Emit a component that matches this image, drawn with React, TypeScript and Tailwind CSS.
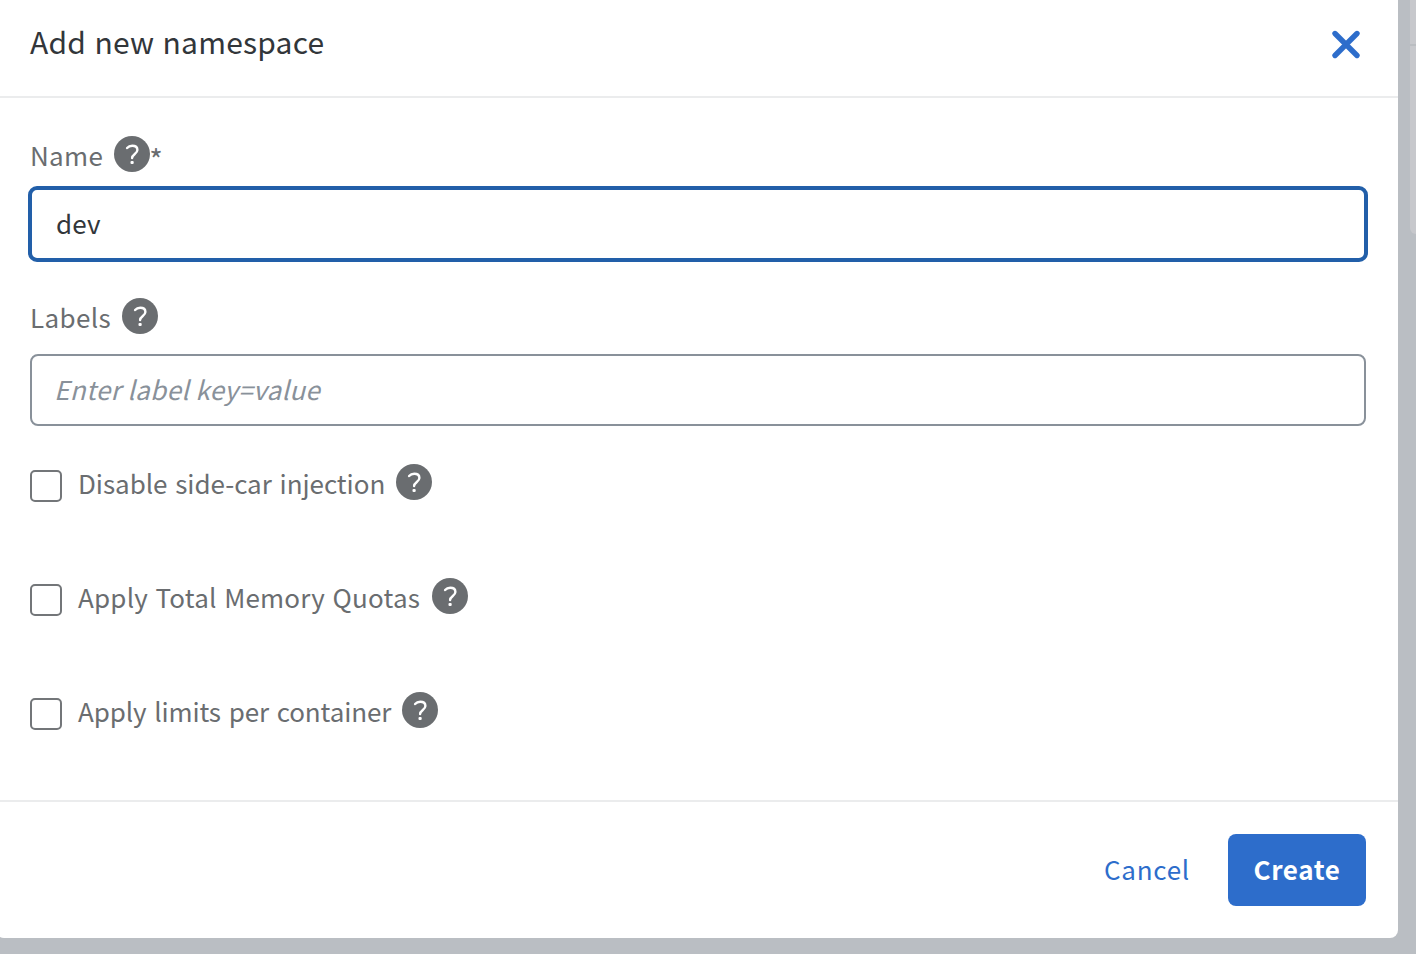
import React, { useState } from "react";

function HelpIcon({ className = "" }: { className?: string }) {
  return (
    <svg viewBox="0 0 36 36" className={`size-9 shrink-0 ${className}`} role="img" aria-label="Help">
      <circle cx="18" cy="18" r="18" fill="#6a6d70" />
      <path
        d="M13.1 12c1.3-1.5 2.9-2.2 5.1-2.2 3.1 0 5.2 1.6 5.2 4.2 0 3.9-5.3 4-5.3 8.1"
        fill="none"
        stroke="#fff"
        strokeWidth="2.4"
        strokeLinecap="round"
      />
      <rect x="16.5" y="24.9" width="3.2" height="3.2" rx="1.1" fill="#fff" />
    </svg>
  );
}

function CheckRow({ label, text, gap }: { label: string; text: string; gap: string }) {
  const [checked, setChecked] = useState(false);
  return (
    <div className="flex h-[114px] shrink-0 items-start">
      <button
        type="button"
        role="checkbox"
        aria-checked={checked}
        aria-label={label}
        onClick={() => setChecked(!checked)}
        className="mt-1.5 size-8 rounded-[5px] border-2 border-[#737679] bg-white"
      />
      <span className={`ml-4 mt-px h-9 whitespace-nowrap leading-9 ${text}`}>{label}</span>
      <HelpIcon className={gap} />
    </div>
  );
}

export default function App() {
  const [name, setName] = useState("dev");
  const [labels, setLabels] = useState("");
  return (
    <div className="relative h-[954px] w-[1416px] overflow-hidden bg-[#babec3] font-['Noto_Sans_CJK_SC',sans-serif] text-[26px] text-[#6a6d70]">
      <div className="absolute right-0 top-0 h-[234px] w-1.5 rounded-bl-lg bg-[#c7c8cc]">
        <div className="mt-11 h-0.5 bg-[#babdc1]" />
      </div>
      <div className="relative -ml-1 flex h-[938px] w-[1402px] flex-col rounded-b-lg bg-white">
        <header className="flex h-[98px] shrink-0 items-start justify-between border-b-2 border-[#ebeced] pl-[34px] pr-[38px]">
          <h1 className="mt-[21px] text-[30px] leading-10 tracking-[0.2px] text-[#32363a] [word-spacing:1.5px]">
            Add new namespace
          </h1>
          <button type="button" aria-label="Close" className="mt-[30px] size-7">
            <svg
              viewBox="0 0 28 28"
              className="size-7 overflow-visible"
              fill="none"
              stroke="#2d6dcb"
              strokeWidth="5.4"
              strokeLinecap="round"
            >
              <path d="M3 3.5 25 25.5M25 3.5 3 25.5" />
            </svg>
          </button>
        </header>
        <main className="flex h-[702px] shrink-0 flex-col pl-[34px] pr-8 pt-[38px]">
          <div className="flex h-9 shrink-0 items-start">
            <span className="mt-px leading-9 tracking-[0.3px]">Name</span>
            <HelpIcon className="ml-[11px]" />
            <span className="-ml-px mt-1 text-[29px] leading-9">*</span>
          </div>
          <input
            aria-label="Name"
            value={name}
            onChange={(e) => setName(e.target.value)}
            className="-ml-0.5 mt-3.5 h-[76px] w-[1340px] shrink-0 rounded-[9px] border-4 border-[#225fa9] bg-white px-6 pb-1 tracking-[0.2px] text-[#32363a] outline-none"
          />
          <div className="mt-9 flex h-9 shrink-0 items-start">
            <span className="mt-px leading-9 tracking-[0.4px]">Labels</span>
            <HelpIcon className="ml-[11px]" />
          </div>
          <input
            aria-label="Labels"
            value={labels}
            onChange={(e) => setLabels(e.target.value)}
            placeholder="Enter label key=value"
            className="mb-[38px] mt-5 h-[72px] w-[1336px] shrink-0 rounded-lg border-2 border-[#89919a] bg-white pb-1 pl-[22px] pr-6 tracking-[0.38px] text-[#32363a] outline-none placeholder:italic placeholder:text-[#89919a]"
          />
          <CheckRow
            label="Disable side-car injection"
            text="tracking-[-0.04px] [word-spacing:2px]"
            gap="ml-[11px]"
          />
          <CheckRow
            label="Apply Total Memory Quotas"
            text="tracking-[0.2px] [word-spacing:1.5px]"
            gap="ml-[11.5px]"
          />
          <CheckRow
            label="Apply limits per container"
            text="tracking-[-0.11px] [word-spacing:2px]"
            gap="ml-[11px]"
          />
        </main>
        <footer className="flex h-[138px] shrink-0 items-start justify-end border-t-2 border-[#ebeced] pr-8 pt-8">
          <button type="button" className="h-[72px] px-[38px] pb-1 tracking-[0.75px] text-[#2d6dcb]">
            Cancel
          </button>
          <button
            type="button"
            className="h-[72px] w-[138px] rounded-lg bg-[#2d6dcb] pb-1 font-bold tracking-[0.6px] text-white"
          >
            Create
          </button>
        </footer>
      </div>
    </div>
  );
}
